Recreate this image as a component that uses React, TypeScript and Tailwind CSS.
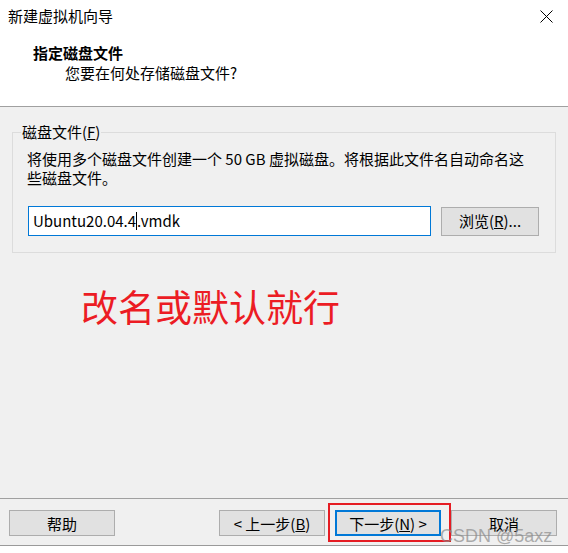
const font = { fontFamily: '"Noto Sans CJK SC", "Noto Sans", sans-serif' };

function WinButton({ children, primary = false }: { children: React.ReactNode; primary?: boolean }) {
  return (
    <div
      className={`w-[106px] h-[26px] flex items-center justify-center text-[15px] leading-none text-black ${
        primary ? 'border-2 border-[#0078d7] bg-[#e1e1e1]' : 'border border-[#adadad] bg-[#e1e1e1]'
      }`}
    >
      {children}
    </div>
  );
}

export default function App() {
  return (
    <div className="w-[568px] h-[553px] bg-white flex flex-col overflow-hidden text-black" style={font}>
      {/* title bar */}
      <div className="h-[32px] flex items-center justify-between pl-[8px] pr-[15px] shrink-0">
        <span className="text-[15px]">新建虚拟机向导</span>
        <svg width="13" height="13" viewBox="0 0 13 13" className="text-black">
          <path d="M0.5 0.5 L12.5 12.5 M12.5 0.5 L0.5 12.5" stroke="currentColor" strokeWidth="1" />
        </svg>
      </div>

      {/* header */}
      <div className="h-[75px] shrink-0 border-b border-[#a0a0a0] pt-[11px]">
        <p className="pl-[33px] text-[15px] leading-[20px] font-bold">指定磁盘文件</p>
        <p className="pl-[65px] text-[15px] leading-[20px]">您要在何处存储磁盘文件?</p>
      </div>

      {/* body */}
      <div className="h-[391px] shrink-0 bg-[#f0f0f0] pt-[15px] flex flex-col">
        <fieldset className="mx-[12px] border border-[#dcdcdc] pl-[14px] pr-[16px] pb-[16px]">
          <legend className="-ml-[6px] px-[1px] text-[15px] leading-[20px]">
            磁盘文件(<span className="underline">F</span>)
          </legend>
          <p className="mt-[7px] text-[15px] leading-[19px]">
            将使用多个磁盘文件创建一个 50 GB 虚拟磁盘。将根据此文件名自动命名这
            <br />
            些磁盘文件。
          </p>
          <div className="mt-[19px] flex items-center gap-[10px] pl-[1px]">
            <div className="w-[403px] h-[30px] border border-[#0078d7] bg-white flex items-center pl-[4px] text-[15px]">
              <span>Ubuntu20.04.4</span>
              <span className="inline-block w-px h-[18px] bg-black" />
              <span>.vmdk</span>
            </div>
            <div className="w-[98px] h-[29px] border border-[#adadad] bg-[#e1e1e1] flex items-center justify-center text-[15px]">
              浏览(<span className="underline">R</span>)...
            </div>
          </div>
        </fieldset>

        <p className="mt-[33px] pl-[81px] text-[37px] leading-[40px] text-[#ec1c24]">改名或默认就行</p>
      </div>

      {/* footer */}
      <div className="relative h-[48px] shrink-0 bg-[#f0f0f0] border-t border-[#a0a0a0] border-b border-b-[#9a9a9a] pt-[11px] flex">
        <div className="ml-[9px]">
          <WinButton>帮助</WinButton>
        </div>
        <div className="ml-[104px]">
          <WinButton>
            &lt; 上一步(<span className="underline">B</span>)
          </WinButton>
        </div>
        <div className="ml-[10px]">
          <WinButton primary>
            下一步(<span className="underline">N</span>) &gt;
          </WinButton>
        </div>
        <div className="ml-[10px]">
          <WinButton>取消</WinButton>
        </div>

        <div className="absolute left-[328px] top-[4px] w-[123px] h-[39px] border-2 border-[#e51c23]" />
        <span
          className="absolute left-[440px] top-[26px] text-[18px] leading-[22px] text-[#8a8a8a]/70"
          style={{ fontFamily: '"Liberation Sans", Arial, sans-serif' }}
        >
          CSDN @5axz
        </span>
      </div>
      <div className="flex-1 bg-white" />
    </div>
  );
}
